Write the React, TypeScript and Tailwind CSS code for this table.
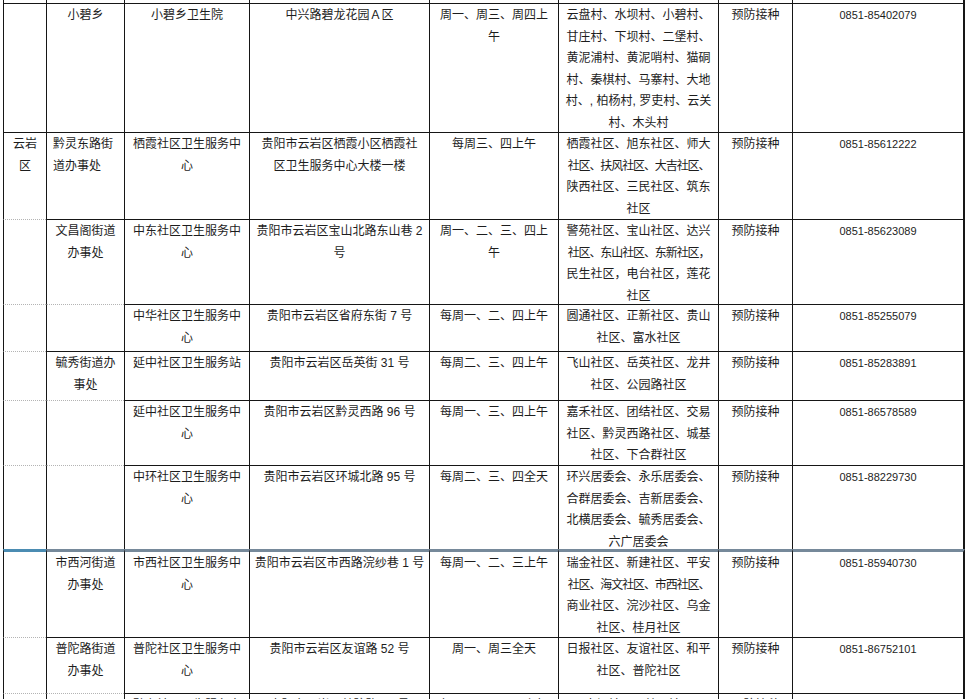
import React from "react"

type Edge = "solid" | "dotted" | "thick" | "thickBlue" | "none"

interface Row {
  h: string
  top: Edge[]
  cells: (string[] | null)[]
  leftCols?: number[]
}

const edgeClass: Record<Edge, string> = {
  solid: "border-t border-t-[#161616]",
  dotted: "border-t border-t-[#b4b4b4] [border-top-style:dotted]",
  thick: "border-t-[3px] border-t-[#76899a]",
  thickBlue: "border-t-[3px] border-t-[#4b8cb2]",
  none: "",
}

const S: Edge = "solid"
const D: Edge = "dotted"

// "~" at the start of a line = tighter punctuation (Word squeezes the 、)
const rows: Row[] = [
  { h: "h-[3px]", top: Array(8).fill("none"), cells: Array(8).fill(null) },
  {
    h: "h-[129px]",
    top: [S, S, S, S, S, S, S, S],
    cells: [
      null,
      ["小碧乡"],
      ["小碧乡卫生院"],
      ["中兴路碧龙花园Ａ区"],
      ["周一、周三、周四上", "午"],
      ["云盘村、水坝村、小碧村、", "甘庄村、下坝村、二堡村、", "黄泥浦村、黄泥哨村、猫硐", "村、秦棋村、马寨村、大地", "村、, 柏杨村, 罗吏村、云关", "村、木头村"],
      ["预防接种"],
      ["0851-85402079"],
    ],
  },
  {
    h: "h-[87px]",
    top: [S, S, S, S, S, S, S, S],
    leftCols: [1],
    cells: [
      ["云岩", "区"],
      ["黔灵东路街", "道办事处"],
      ["栖霞社区卫生服务中", "心"],
      ["贵阳市云岩区栖霞小区栖霞社", "区卫生服务中心大楼一楼"],
      ["每周三、四上午"],
      ["栖霞社区、旭东社区、师大", "~社区、扶风社区、大吉社区、", "陕西社区、三民社区、筑东", "社区"],
      ["预防接种"],
      ["0851-85612222"],
    ],
  },
  {
    h: "h-[85px]",
    top: [D, S, S, S, S, S, S, S],
    cells: [
      null,
      ["文昌阁街道", "办事处"],
      ["中东社区卫生服务中", "心"],
      ["贵阳市云岩区宝山北路东山巷 2", "号"],
      ["周一、二、三、四上", "午"],
      ["警苑社区、宝山社区、达兴", "~社区、东山社区、东新社区，", "民生社区，电台社区，莲花", "社区"],
      ["预防接种"],
      ["0851-85623089"],
    ],
  },
  {
    h: "h-[47px]",
    top: [D, D, S, S, S, S, S, S],
    cells: [
      null,
      null,
      ["中华社区卫生服务中", "心"],
      ["贵阳市云岩区省府东街 7 号"],
      ["每周一、二、四上午"],
      ["圆通社区、正新社区、贵山", "社区、富水社区"],
      ["预防接种"],
      ["0851-85255079"],
    ],
  },
  {
    h: "h-[49px]",
    top: [D, S, S, S, S, S, S, S],
    cells: [
      null,
      ["毓秀街道办", "事处"],
      ["延中社区卫生服务站"],
      ["贵阳市云岩区岳英街 31 号"],
      ["每周二、三、四上午"],
      ["飞山社区、岳英社区、龙井", "社区、公园路社区"],
      ["预防接种"],
      ["0851-85283891"],
    ],
  },
  {
    h: "h-[65px]",
    top: [D, D, S, S, S, S, S, S],
    cells: [
      null,
      null,
      ["延中社区卫生服务中", "心"],
      ["贵阳市云岩区黔灵西路 96 号"],
      ["每周一、三、四上午"],
      ["嘉禾社区、团结社区、交易", "社区、黔灵西路社区、城基", "社区、下合群社区"],
      ["预防接种"],
      ["0851-86578589"],
    ],
  },
  {
    h: "h-[84px]",
    top: [D, D, S, S, S, S, S, S],
    cells: [
      null,
      null,
      ["中环社区卫生服务中", "心"],
      ["贵阳市云岩区环城北路 95 号"],
      ["每周二、三、四全天"],
      ["环兴居委会、永乐居委会、", "合群居委会、吉新居委会、", "北横居委会、毓秀居委会、", "六广居委会"],
      ["预防接种"],
      ["0851-88229730"],
    ],
  },
  {
    h: "h-[88px]",
    top: ["thickBlue", "thick", "thick", "thick", "thick", "thick", "thick", "thick"],
    cells: [
      null,
      ["市西河街道", "办事处"],
      ["市西社区卫生服务中", "心"],
      ["贵阳市云岩区市西路浣纱巷 1 号"],
      ["每周一、二、三上午"],
      ["瑞金社区、新建社区、平安", "~社区、海文社区、市西社区、", "商业社区、浣沙社区、乌金", "社区、桂月社区"],
      ["预防接种"],
      ["0851-85940730"],
    ],
  },
  {
    h: "h-[56px]",
    top: [D, S, S, S, S, S, S, S],
    cells: [
      null,
      ["普陀路街道", "办事处"],
      ["普陀社区卫生服务中", "心"],
      ["贵阳市云岩区友谊路 52 号"],
      ["周一、周三全天"],
      ["日报社区、友谊社区、和平", "社区、普陀社区"],
      ["预防接种"],
      ["0851-86752101"],
    ],
  },
  {
    h: "h-[44px]",
    top: [D, D, S, S, S, S, S, S],
    cells: [
      null,
      null,
      ["黔东社区卫生服务中", "心"],
      ["贵阳市云岩区普陀路 27 号"],
      ["每周一、三、四上午"],
      ["南垭社区、普天社区"],
      ["预防接种"],
      ["0851-86811203"],
    ],
  },
]

function Cell({ lines, edge, col, left }: { lines: string[] | null; edge: Edge; col: number; left: boolean }) {
  const isPhone = col === 7
  return (
    <div
      className={[
        "border-l border-l-[#161616] pt-[1px] overflow-hidden leading-[21.5px] text-[#1d1d1d]",
        edgeClass[edge],
        col === 7 ? "border-r-2 border-r-[#161616]" : "",
        left ? "text-left pl-[6px]" : "text-center",
        isPhone ? "text-[11px]" : "text-[12px]",
      ].join(" ")}
    >
      {lines?.map((line, i) =>
        line.startsWith("~") ? (
          <div key={i} className="whitespace-nowrap tracking-[-1.1px]">
            {line.slice(1)}
          </div>
        ) : (
          <div key={i} className="whitespace-nowrap">
            {line}
          </div>
        )
      )}
    </div>
  )
}

export default function App() {
  return (
    <div className="h-[699px] w-[968px] overflow-hidden bg-white font-['Liberation_Sans','Noto_Sans_CJK_SC',sans-serif]">
      <div className="ml-[3px] flex flex-col">
        {rows.map((row, r) => (
          <div key={r} className={`grid grid-cols-[43px_78px_125px_180px_129px_160px_74px_173px] ${row.h}`}>
            {row.cells.map((lines, c) => (
              <Cell key={c} lines={lines} edge={row.top[c]} col={c} left={!!row.leftCols?.includes(c)} />
            ))}
          </div>
        ))}
      </div>
    </div>
  )
}
